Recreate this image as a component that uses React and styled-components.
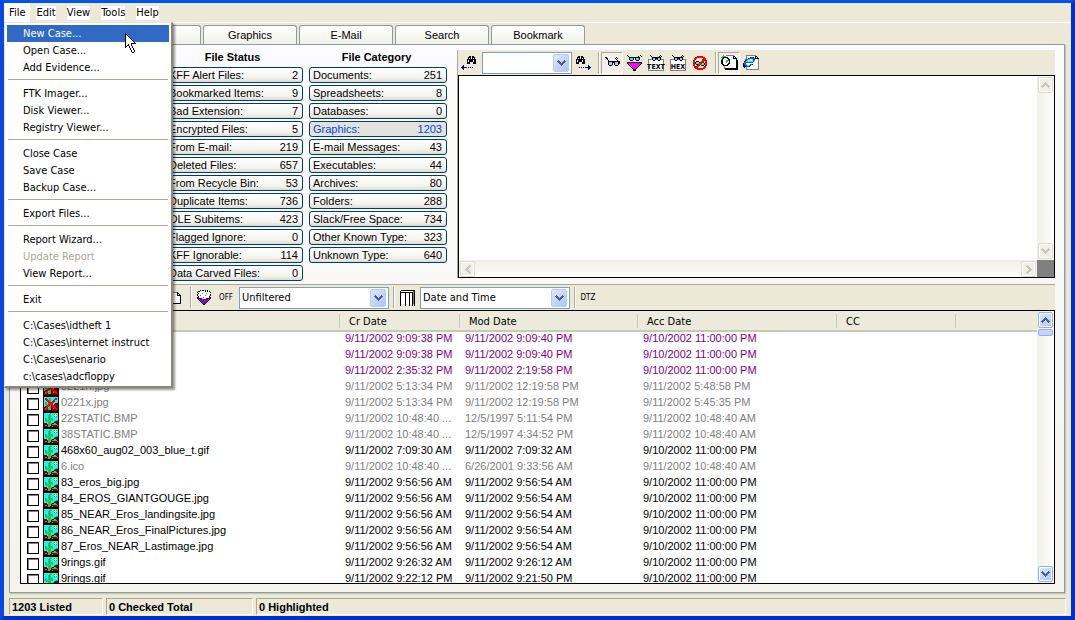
import React, { Component } from 'react'
import styled, { css, createGlobalStyle } from 'styled-components'

const tahoma = '"DejaVu Sans Condensed", "DejaVu Sans", sans-serif'
const arial = '"Liberation Sans", sans-serif'

const GlobalStyle = createGlobalStyle`
  * {
    box-sizing: border-box;
  }

  body {
    margin: 0;
    font: 11px/16px ${arial};
    color: #000000;
  }

  button,
  select,
  input {
    margin: 0;
    font: inherit;
    color: inherit;
  }
`

const Window = styled.div`
  display: flex;
  flex-direction: column;
  height: 100vh;
  min-height: 480px;
  border: 4px solid #0848e0;
  border-top: 3px solid #0055ea;
  border-right-color: #0030c8;
  border-bottom-color: #0030c8;
  background-color: #ece9d8;
`

/* menu bar */

const MenuBar = styled.nav`
  display: flex;
  gap: 1px;
  height: 20px;
  flex-shrink: 0;
  border-bottom: 1px solid #ffffff;
`

const MenuHolder = styled.div`
  position: relative;
  display: flex;
`

const MenuTitle = styled.button`
  padding: 0 5px;
  border: 0;
  font-family: ${tahoma};
  background-color: ${({ open }) => (open ? '#ffffff' : 'transparent')};
`

const MenuTitleText = styled.span`
  display: block;
  line-height: 14px;
  background-color: #ffffff;
`

const Menu = styled.div`
  position: absolute;
  z-index: 2;
  top: 19px;
  left: 0;
  width: 169px;
  padding: 2px 2px 1px 2px;
  border: 1px solid #ece9d8;
  border-right: 2px solid #8a867a;
  border-bottom: 2px solid #8a867a;
  background-color: #ffffff;
  box-shadow: 2px 2px 2px rgba(0, 0, 0, 0.4);
`

const MenuItem = styled.button`
  display: block;
  width: 100%;
  height: 17px;
  padding: 0 0 0 16px;
  border: 0;
  font-family: ${tahoma};
  line-height: 17px;
  text-align: left;
  white-space: nowrap;
  color: ${({ active, disabled }) => (active ? '#ffffff' : disabled ? '#aca899' : '#000000')};
  background-color: ${({ active }) => (active ? '#316ac5' : 'transparent')};
`

const MenuLine = styled.hr`
  height: 1px;
  margin: 3px 1px 5px;
  border: 0;
  background-color: #aca899;
`

const Pointer = styled.svg`
  position: absolute;
  z-index: 3;
  top: 10px;
  left: 120px;
`

/* tabs and the page under them */

const Tabs = styled.div`
  display: flex;
  flex-shrink: 0;
  gap: 2px;
  height: 21px;
  padding: 2px 0 0 7px;
`

const Tab = styled.button`
  width: 94px;
  padding: 0;
  border: 1px solid #919b9c;
  border-bottom: 0;
  border-radius: 3px 3px 0 0;
  background: linear-gradient(#ffffff, #f0f0ea);
`

const Page = styled.main`
  display: flex;
  flex: 1;
  flex-direction: column;
  min-height: 0;
  margin: 0 6px 0 5px;
  padding: 5px 9px 8px 10px;
  border: 1px solid #919b9c;
  background: linear-gradient(#fcfcfe, #f4f3ee);
  box-shadow: 1px 1px 1px #c8c5b2;
`

const Upper = styled.div`
  display: flex;
  flex-shrink: 0;
  height: 234px;
`

const Groups = styled.div`
  display: flex;
  flex-shrink: 0;
  gap: 6px;
  width: 437px;
  padding-left: 1px;
`

const Group = styled.section`
  display: flex;
  flex-direction: column;
  gap: 2px;
  width: 138px;
`

const GroupTitle = styled.h2`
  height: 15px;
  margin: 0;
  padding-right: 3px;
  font-size: 11px;
  line-height: 15px;
  text-align: center;
`

const Count = styled.button`
  display: flex;
  justify-content: space-between;
  height: 16px;
  padding: 0 4px 0 3px;
  border: 1px solid #003c74;
  border-radius: 3px;
  line-height: 14px;
  white-space: nowrap;
  color: ${({ active }) => (active ? '#0046d5' : '#000000')};
  background: ${({ active }) => (active ? '#e3e2dc' : 'linear-gradient(#ffffff, #f3f3ef 70%, #dedbd0)')};
`

const Preview = styled.section`
  display: flex;
  flex: 1;
  flex-direction: column;
  height: 228px;
  min-width: 0;
  border-left: 1px solid #aca899;
`

const PreviewBody = styled.div`
  display: grid;
  flex: 1;
  grid-template-columns: 1fr 17px;
  grid-template-rows: 1fr 17px;
  border: 1px solid #000000;
  background-color: #ffffff;
`

const Corner = styled.div`
  background-color: #808080;
`

/* toolbars */

const Toolbar = styled.div`
  display: flex;
  flex-shrink: 0;
  align-items: center;
  height: ${({ lined }) => (lined ? 26 : 25)}px;
  padding-left: ${({ lined }) => (lined ? 12 : 0)}px;
  border-top: ${({ lined }) => (lined ? '1px solid #aca899' : '0')};
  background-color: #ece9d8;
`

const Tool = styled.button`
  display: flex;
  align-items: center;
  justify-content: center;
  flex-shrink: 0;
  width: 22px;
  height: 22px;
  padding: 0;
  border: 1px solid transparent;
  font-family: ${tahoma};
  font-size: 8px;
  background-color: transparent;
  ${({ pressed }) => pressed && css`
    border-color: #aca899 #ffffff #ffffff #aca899;
    background-color: #f2f0e6;
  `}
`

const ToolLine = styled.div`
  flex-shrink: 0;
  width: 2px;
  height: 21px;
  margin: 0 1px 0 4px;
  border-left: 1px solid #aca899;
  border-right: 1px solid #ffffff;
`

const Combo = styled.div`
  display: grid;
  flex-shrink: 0;
  grid-template-columns: 1fr 18px;
  align-items: center;
  width: ${({ wide }) => (wide ? 150 : 90)}px;
  height: 22px;
  margin-left: 2px;
  border: 1px solid #7f9db9;
  background-color: #ffffff;
`

const ComboField = styled.select`
  grid-area: 1 / 1 / 2 / 3;
  width: 100%;
  height: 20px;
  padding: 0 0 0 2px;
  border: 0;
  appearance: none;
  font-family: ${tahoma};
  background-color: transparent;
`

const ComboArrow = styled.span`
  display: flex;
  grid-area: 1 / 2 / 2 / 3;
  align-items: center;
  justify-content: center;
  width: 16px;
  height: 18px;
  border: 1px solid #b9cbf3;
  border-radius: 2px;
  background: linear-gradient(135deg, #dfe8fe, #aec4f6);
  pointer-events: none;
`

/* scroll bars */

const Track = styled.div`
  display: flex;
  flex-direction: ${({ horizontal }) => (horizontal ? 'row' : 'column')};
  justify-content: space-between;
  padding: 1px;
  background: linear-gradient(${({ horizontal }) => (horizontal ? '180deg' : '90deg')}, #f0efe8, #fefefb);
`

const TrackButton = styled.button`
  display: flex;
  align-items: center;
  justify-content: center;
  width: 15px;
  height: 16px;
  padding: 0;
  border: 1px solid ${({ disabled }) => (disabled ? '#dddbcd' : '#98b1e4')};
  border-radius: 2px;
  outline: 1px solid #ffffff;
  outline-offset: -2px;
  background: ${({ disabled }) => (disabled ? '#efeee7' : 'linear-gradient(135deg, #dfe8fe, #aec4f6)')};
`

const Thumb = styled.div`
  height: 7px;
  margin-top: 1px;
  border: 1px solid #98b1e4;
  border-radius: 2px;
  background-color: #c3d3fd;
`

/* file list */

const List = styled.section`
  display: flex;
  flex: 1;
  min-height: 0;
  border: 1px solid #000000;
  background-color: #ffffff;
`

const ListScroller = styled.div`
  flex: 1;
  overflow: hidden;
`

const Table = styled.table`
  width: 100%;
  border-collapse: collapse;
  table-layout: fixed;
`

const Th = styled.th`
  width: ${({ cellWidth }) => (cellWidth ? `${cellWidth}px` : 'auto')};
  height: 20px;
  padding: 0;
  border-bottom: 2px solid #cbc7b8;
  font-family: ${tahoma};
  font-weight: normal;
  text-align: left;
  background-color: #ebeadb;
`

const ThLabel = styled.span`
  display: block;
  height: 14px;
  padding-left: 9px;
  border-right: 1px solid #c7c5b2;
  box-shadow: 1px 0 0 #ffffff;
  line-height: 15px;
  ${({ last }) => last && css`
    border: 0;
    box-shadow: none;
  `}
`

const rowColors = { alert: '#800080', deleted: '#808080', normal: '#000000' }

const Tr = styled.tr`
  color: ${({ kind }) => rowColors[kind]};
`

const Td = styled.td`
  height: 16px;
  padding: 0 0 4px 5px;
  line-height: 12px;
  white-space: nowrap;
`

const NameTd = styled.td`
  height: 16px;
  padding: 0 0 0 6px;
`

const NameCell = styled.div`
  display: flex;
  align-items: flex-start;
  height: 16px;
`

const Check = styled.input`
  flex-shrink: 0;
  width: 12px;
  height: 12px;
  margin: 2px 4px 0 0;
  appearance: none;
  border: 1px solid #000000;
  background-color: #ffffff;
  box-shadow: inset 1px 1px 0 #808080;
`

const FileLabel = styled.label`
  display: flex;
  gap: 2px;
  height: 16px;
  line-height: 12px;
  white-space: nowrap;
`

/* status bar */

const StatusBar = styled.footer`
  display: flex;
  flex-shrink: 0;
  gap: 3px;
  padding: 5px 5px 1px 5px;
`

const StatusCell = styled.div`
  flex: ${({ cellWidth }) => (cellWidth ? `0 0 ${cellWidth}px` : '1')};
  height: 17px;
  padding: 1px 0 0 2px;
  border: 1px solid #ffffff;
  border-top-color: #aca899;
  border-left-color: #aca899;
  font-weight: bold;
  line-height: 14px;
`

/* drawings: one character for each dot */

const inks = {
  k: '#000000',
  w: '#ffffff',
  c: '#00ffff',
  s: '#99ccff',
  m: '#ff00ff',
  p: '#9400d3',
  r: '#ff0000',
  d: '#800000',
  g: '#00e040',
  h: '#808080',
  y: '#ffff00',
  b: '#4d6185',
  l: '#c9c7ba',
  n: '#000080',
  t: '#2060c8'
}

const drawings = {
  down: ['.b.....b.', 'bbb...bbb', '.bbb.bbb.', '..bbbbb..', '...bbb...', '....b....'],
  up: ['....b....', '...bbb...', '..bbbbb..', '.bbb.bbb.', 'bbb...bbb', '.b.....b.'],
  upOff: ['....l....', '...lll...', '..lllll..', '.lll.lll.', 'lll...lll', '.l.....l.'],
  downOff: ['.l.....l.', 'lll...lll', '.lll.lll.', '..lllll..', '...lll...', '....l....'],
  leftOff: ['....l.', '...lll', '..lll.', '.lll..', 'lll...', '.lll..', '..lll.', '...lll', '....l.'],
  rightOff: ['.l....', 'lll...', '.lll..', '..lll.', '...lll', '..lll.', '.lll..', 'lll...', '.l....'],
  findBack: [
    '........kk.kk...',
    '.......kkk.kkk..',
    '.......kwk.kwk..',
    '......kkkkkkkkk.',
    '......kwkkkkwkk.',
    '......kwkkkkwkk.',
    '......kkk...kkk.',
    '......kkk...kkk.',
    '................',
    '..n.............',
    '.nn.............',
    'nnnnnn.n.n.n....',
    '.nn.............',
    '..n.............'
  ],
  findNext: [
    '...kk.kk........',
    '..kkk.kkk.......',
    '..kwk.kwk.......',
    '.kkkkkkkkk......',
    '.kwkkkkwkk......',
    '.kwkkkkwkk......',
    '.kkk...kkk......',
    '.kkk...kkk......',
    '................',
    '.............n..',
    '.............nn.',
    '....n.n.n.nnnnnn',
    '.............nn.',
    '.............n..'
  ],
  glasses: [
    'kk.........k...',
    '.kk.......k.k..',
    '..k........k...',
    '...k........k..',
    '...kkkkkkkkkkkk',
    '...kssskkkssskk',
    '...ksssk.kssskk',
    '...ksssk.ksssk.',
    '....kkk...kkk..',
    '...............',
    '...............'
  ],
  filter: [
    'k............k.',
    '.k.........k..k',
    '..kkkkkkkkkkk..',
    '..kccck.kccck..',
    '..kccck.kccck..',
    '...kkk...kkk...',
    '...............',
    'kkkkkkkkkkkkkkk',
    'kmmmmmmmmmmmmmk',
    '.kmmmmmmmmmmmk.',
    '..kmmmmmmmmmk..',
    '...kmmmmmmmk...',
    '....kmmmmmk....',
    '.....kmmmk.....',
    '......kkk......',
    '......kkk......'
  ],
  noView: [
    '....rrrrrr....',
    '..rrrrrrrrrr..',
    '.rrr......rrr.',
    '.rr......rrrr.',
    'rr.......rrrrr',
    'rr.kkk..rrr.rr',
    'rrkccckrrrk.rr',
    'rrkcccrrrcckrr',
    'rr.kkrrrccckrr',
    'rr..rrr.kkk.rr',
    '.rrrrr.....rr.',
    '.rrrr.....rrr.',
    '..rrrrrrrrrr..',
    '....rrrrrr....'
  ],
  pageFind: [
    '..g..hhhhhhhh....',
    '.gghhwwwwwwwkk...',
    'ggkkkkkwwwwwkwk..',
    '.kkwwwkkwwwwkkkk.',
    'gkwwwwwkkwwwwwwk.',
    'kkwwwgggkwwwwwwkk',
    'kkwwwggwkwwwwwwkk',
    'kkwwwgwwkwwwwwwkk',
    'kkwwwwwkkwwwwwwkk',
    '.kkwwwkkwwwwwwwkk',
    '..kkkkkwwwwwwwwkk',
    '...hwwwwwwwwwwwkk',
    '...hwwwwwwwwwwwkk',
    '...hkkkkkkkkkkkkk',
    '....kkkkkkkkkkkkk'
  ],
  web: [
    '...hhhhhhhhhh...',
    '...hwwwwwwwwkk..',
    '...hwwwnttnwkwk.',
    '...hwnttttntkkkk',
    '..hntccwwcttwwwh',
    '..ntcwwwwcttwwwh',
    '.ntccccccctwwwwh',
    '.tttttttttwwwwwh',
    'nttwwwwwwwwwwwwh',
    'nttcwwwttnwwwwwh',
    'nnttccttwwwwwwwh',
    'nnntttnwwwwwwwwh',
    '.n.hwwwwwwwwwwwh',
    '...hwwwwwwwwwwwh',
    '...hhhhhhhhhhhhh'
  ],
  page: [
    'hhhhhhhhk...',
    'hwwwwwwwkk..',
    'hwwwwwwwkwk.',
    'hwwwwwwwkkkk',
    'hwwwwwwwwwwk',
    'hwwwwwwwwwwk',
    'hwwwwwwwwwwk',
    'hwwwwwwwwwwk',
    'hwwwwwwwwwwk',
    'hwwwwwwwwwwk',
    'hwwwwwwwwwwk',
    'kkkkkkkkkkkk'
  ],
  filterOff: [
    '...k.kk.k.k...',
    '.kkwwwwwkwkwk.',
    'kwwwwwwwwwwwwk',
    '.kwwwhwwwhwww.',
    'kwwwwwwwwwwwwk',
    'kwwhwwwwhwwwwk',
    '.kwwwwwwwwwwk.',
    'kkwwwwhwwwwwkk',
    'kppkkwwwwkkppk',
    '.kppppkkppppk.',
    '..kppppppppk..',
    '...kppppppk...',
    '....kppppk....',
    '.....kppk.....',
    '......kk......'
  ],
  columns: [
    '.kkkkkkkkkkkkkk',
    'kwwwwwwwwwwwwhk',
    'kkkkkkkkkkkkkhk',
    'kwwwwkwwwkwwkhk',
    'kwwwwkwwwkwwkhk',
    'kwwwwkwwwkwwkhk',
    'kwwwwkwwwkwwkhk',
    'kwwwwkwwwkwwkhk',
    'kwwwwkwwwkwwkhk',
    'kwwwwkwwwkwwkhk',
    'kwwwwkwwwkwwkhk',
    'kwwwwkwwwkwwkhk',
    'kwwwwkwwwkwwkhk',
    'kwwwwkwwwkwwkhk',
    'k....k...k..k.k',
    'k....k...k..k.k'
  ],
  picture: [
    'kkkkkkkkkkkkkkkk',
    'kcccccchccccccck',
    'kccccchgccchyhck',
    'kccccghgcccyyyck',
    'kccccghgccchyhck',
    'kccccghgccccccck',
    'kchgcghghgccccck',
    'kchgcghghgccccck',
    'kchgggggggccchhk',
    'kcchgghgccchdddk',
    'kccccghgcchddddk',
    'kdddcghghddggddk',
    'kddddghgdhggggdk',
    'kdhhdghgddddddhk',
    'kddddghddhdddddk',
    'kkkkkkkkkkkkkkkk'
  ],
  pictureDeleted: [
    'kkkkkkkkkkkkkkkk',
    'kcccccccccccccck',
    'kcrrcchgccccrrck',
    'kcrrrchgcccrrrck',
    'kccrrrhgccrrccck',
    'kcccrrrgcrrrccck',
    'kchgcrrrrrrccchk',
    'kchgchrrrrccdddk',
    'kchggrrrrrcddddk',
    'kcchrrrhrrrddddk',
    'kcddrrghdrrrdddk',
    'kddrrcghddrrrddk',
    'kdhrrgghddhrrrdk',
    'kdrrdgghdddddrdk',
    'kddddddddddddddk',
    'kkkkkkkkkkkkkkkk'
  ],
  pointer: [
    'k..........',
    'kk.........',
    'kwk........',
    'kwwk.......',
    'kwwwk......',
    'kwwwwk.....',
    'kwwwwwk....',
    'kwwwwwwk...',
    'kwwwwwwwk..',
    'kwwwwwwwwk.',
    'kwwwwwkkkkk',
    'kwwkwwk....',
    'kwkkwwk....',
    'kk..kwwk...',
    'k...kwwk...',
    '.....kwwk..',
    '.....kwwk..',
    '......kwwk.',
    '......kwwk.',
    '.......kk..'
  ]
}

const Dots = ({ rows }) =>
  rows.map((row, y) =>
    [...row.matchAll(/([a-z])\1*/g)].map(run => (
      <rect
        key={`${y}-${run.index}`}
        x={run.index}
        y={y}
        width={run[0].length}
        height="1"
        fill={inks[run[1]]}
      />
    ))
  )

const Icon = ({ name }) => {
  const rows = drawings[name]
  return (
    <svg width={rows[0].length} height={rows.length} shapeRendering="crispEdges" aria-hidden="true">
      <Dots rows={rows} />
    </svg>
  )
}

// glasses over a sheet with the name of the view on it
const SheetIcon = ({ text }) => (
  <svg width="18" height="18" aria-hidden="true">
    <rect x="1.5" y="5.5" width="15" height="11" fill="#ffffff" stroke="#808080" />
    <g transform="translate(3 1)" shapeRendering="crispEdges">
      <Dots rows={['k.........k..', '.k.......k.k.', '..kkkkkkkkk..', '..ksskkkssk..', '..kssk.kssk..', '...kk...kk...']} />
    </g>
    <text
      x="9"
      y="15"
      textAnchor="middle"
      fontFamily="'Liberation Sans Narrow', 'DejaVu Sans Condensed', 'Liberation Sans', sans-serif"
      fontWeight="bold"
      fontSize="7"
    >
      {text}
    </text>
  </svg>
)

const ComboBox = ({ label, options, wide }) => (
  <Combo wide={wide || undefined}>
    <ComboField aria-label={label}>
      {options.map(option => <option key={option}>{option}</option>)}
    </ComboField>
    <ComboArrow><Icon name="down" /></ComboArrow>
  </Combo>
)

const fileMenu = [
  ['New Case...', 'Open Case...', 'Add Evidence...'],
  ['FTK Imager...', 'Disk Viewer...', 'Registry Viewer...'],
  ['Close Case', 'Save Case', 'Backup Case...'],
  ['Export Files...'],
  ['Report Wizard...', 'Update Report', 'View Report...'],
  ['Exit'],
  ['C:\\Cases\\idtheft 1', 'C:\\Cases\\internet instruct', 'C:\\Cases\\senario', 'c:\\cases\\adcfloppy']
]

// the first two tabs and the first group lie under the open menu
const tabs = ['', '', 'Graphics', 'E-Mail', 'Search', 'Bookmark']

const groups = [
  { title: '', counts: [] },
  {
    title: 'File Status',
    counts: [
      ['KFF Alert Files:', 2],
      ['Bookmarked Items:', 9],
      ['Bad Extension:', 7],
      ['Encrypted Files:', 5],
      ['From E-mail:', 219],
      ['Deleted Files:', 657],
      ['From Recycle Bin:', 53],
      ['Duplicate Items:', 736],
      ['OLE Subitems:', 423],
      ['Flagged Ignore:', 0],
      ['KFF Ignorable:', 114],
      ['Data Carved Files:', 0]
    ]
  },
  {
    title: 'File Category',
    counts: [
      ['Documents:', 251],
      ['Spreadsheets:', 8],
      ['Databases:', 0],
      ['Graphics:', 1203],
      ['E-mail Messages:', 43],
      ['Executables:', 44],
      ['Archives:', 80],
      ['Folders:', 288],
      ['Slack/Free Space:', 734],
      ['Other Known Type:', 323],
      ['Unknown Type:', 640]
    ]
  }
]

const columns = [
  ['', 319],
  ['Cr Date', 120],
  ['Mod Date', 178],
  ['Acc Date', 199],
  ['CC', 119],
  ['']
]

const files = [
  ['alert', '', '9/11/2002 9:09:38 PM', '9/11/2002 9:09:40 PM', '9/10/2002 11:00:00 PM'],
  ['alert', '', '9/11/2002 9:09:38 PM', '9/11/2002 9:09:40 PM', '9/10/2002 11:00:00 PM'],
  ['alert', '', '9/11/2002 2:35:32 PM', '9/11/2002 2:19:58 PM', '9/10/2002 11:00:00 PM'],
  ['deleted', '0221n.jpg', '9/11/2002 5:13:34 PM', '9/11/2002 12:19:58 PM', '9/11/2002 5:48:58 PM', 'pictureDeleted'],
  ['deleted', '0221x.jpg', '9/11/2002 5:13:34 PM', '9/11/2002 12:19:58 PM', '9/11/2002 5:45:35 PM', 'pictureDeleted'],
  ['deleted', '22STATIC.BMP', '9/11/2002 10:48:40 ...', '12/5/1997 5:11:54 PM', '9/11/2002 10:48:40 AM'],
  ['deleted', '38STATIC.BMP', '9/11/2002 10:48:40 ...', '12/5/1997 4:34:52 PM', '9/11/2002 10:48:40 AM'],
  ['normal', '468x60_aug02_003_blue_t.gif', '9/11/2002 7:09:30 AM', '9/11/2002 7:09:32 AM', '9/10/2002 11:00:00 PM'],
  ['deleted', '6.ico', '9/11/2002 10:48:40 ...', '6/26/2001 9:33:56 AM', '9/11/2002 10:48:40 AM'],
  ['normal', '83_eros_big.jpg', '9/11/2002 9:56:56 AM', '9/11/2002 9:56:54 AM', '9/10/2002 11:00:00 PM'],
  ['normal', '84_EROS_GIANTGOUGE.jpg', '9/11/2002 9:56:56 AM', '9/11/2002 9:56:54 AM', '9/10/2002 11:00:00 PM'],
  ['normal', '85_NEAR_Eros_landingsite.jpg', '9/11/2002 9:56:56 AM', '9/11/2002 9:56:54 AM', '9/10/2002 11:00:00 PM'],
  ['normal', '86_NEAR_Eros_FinalPictures.jpg', '9/11/2002 9:56:56 AM', '9/11/2002 9:56:54 AM', '9/10/2002 11:00:00 PM'],
  ['normal', '87_Eros_NEAR_Lastimage.jpg', '9/11/2002 9:56:56 AM', '9/11/2002 9:56:54 AM', '9/10/2002 11:00:00 PM'],
  ['normal', '9rings.gif', '9/11/2002 9:26:32 AM', '9/11/2002 9:26:12 AM', '9/10/2002 11:00:00 PM'],
  ['normal', '9rings.gif', '9/11/2002 9:22:12 PM', '9/11/2002 9:21:50 PM', '9/10/2002 11:00:00 PM']
]

const FileMenu = () => (
  <Menu>
    {fileMenu.map((items, i) => (
      <React.Fragment key={items[0]}>
        {i > 0 && <MenuLine />}
        {items.map(item => (
          <MenuItem
            key={item}
            active={item === 'New Case...' || undefined}
            disabled={item === 'Update Report'}
          >
            {item}
          </MenuItem>
        ))}
      </React.Fragment>
    ))}
    <Pointer width="11" height="20" shapeRendering="crispEdges" aria-hidden="true">
      <Dots rows={drawings.pointer} />
    </Pointer>
  </Menu>
)

const FileRow = ({ file, id }) => {
  const [kind, name, created, modified, accessed, icon = 'picture'] = file
  return (
    <Tr kind={kind}>
      <NameTd>
        <NameCell>
          <Check type="checkbox" id={id} aria-label={name || 'File'} />
          <FileLabel htmlFor={id}><Icon name={icon} />{name}</FileLabel>
        </NameCell>
      </NameTd>
      <Td>{created}</Td>
      <Td>{modified}</Td>
      <Td>{accessed}</Td>
      <Td />
      <Td />
    </Tr>
  )
}

class App extends Component {
  render() {
    return (
      <Window>
        <GlobalStyle />
        <MenuBar>
          <MenuHolder>
            <MenuTitle open><MenuTitleText>File</MenuTitleText></MenuTitle>
            <FileMenu />
          </MenuHolder>
          {['Edit', 'View', 'Tools', 'Help'].map(title => (
            <MenuTitle key={title}><MenuTitleText>{title}</MenuTitleText></MenuTitle>
          ))}
        </MenuBar>
        <Tabs>
          {tabs.map((tab, i) => (
            <Tab key={i} aria-label={tab || `Tab ${i + 1}`}>{tab}</Tab>
          ))}
        </Tabs>
        <Page>
          <Upper>
            <Groups>
              {groups.map(({ title, counts }) => (
                <Group key={title}>
                  <GroupTitle>{title}</GroupTitle>
                  {counts.map(([label, value]) => (
                    <Count key={label} active={label === 'Graphics:' || undefined}>
                      <span>{label}</span>
                      <span>{value}</span>
                    </Count>
                  ))}
                </Group>
              ))}
            </Groups>
            <Preview>
              <Toolbar>
                <Tool aria-label="Find previous"><Icon name="findBack" /></Tool>
                <ComboBox label="Find" options={['']} />
                <Tool aria-label="Find next"><Icon name="findNext" /></Tool>
                <ToolLine />
                <Tool pressed aria-label="View"><Icon name="glasses" /></Tool>
                <Tool aria-label="View filtered text"><Icon name="filter" /></Tool>
                <Tool aria-label="View as text"><SheetIcon text="TEXT" /></Tool>
                <Tool aria-label="View as hex"><SheetIcon text="HEX" /></Tool>
                <Tool aria-label="No view"><Icon name="noView" /></Tool>
                <ToolLine />
                <Tool pressed aria-label="Outside viewer"><Icon name="pageFind" /></Tool>
                <Tool aria-label="Browser viewer"><Icon name="web" /></Tool>
              </Toolbar>
              <PreviewBody>
                <div />
                <Track>
                  <TrackButton disabled aria-label="Up"><Icon name="upOff" /></TrackButton>
                  <TrackButton disabled aria-label="Down"><Icon name="downOff" /></TrackButton>
                </Track>
                <Track horizontal>
                  <TrackButton disabled aria-label="Left"><Icon name="leftOff" /></TrackButton>
                  <TrackButton disabled aria-label="Right"><Icon name="rightOff" /></TrackButton>
                </Track>
                <Corner />
              </PreviewBody>
            </Preview>
          </Upper>
          <Toolbar lined>
            {[1, 2, 3, 4, 5, 6, 7].map(n => (
              <Tool key={n} aria-label={`Page ${n}`}><Icon name="page" /></Tool>
            ))}
            <ToolLine />
            <Tool aria-label="Filter"><Icon name="filterOff" /></Tool>
            <Tool>OFF</Tool>
            <ComboBox label="Filter name" options={['Unfiltered']} wide />
            <ToolLine />
            <Tool aria-label="Columns"><Icon name="columns" /></Tool>
            <ComboBox label="Column setting" options={['Date and Time']} wide />
            <ToolLine />
            <Tool>DTZ</Tool>
          </Toolbar>
          <List>
            <ListScroller>
              <Table>
                <thead>
                  <tr>
                    {columns.map(([label, width], i) => (
                      <Th key={i} cellWidth={width}>
                        <ThLabel last={!width || undefined}>{label}</ThLabel>
                      </Th>
                    ))}
                  </tr>
                </thead>
                <tbody>
                  {files.map((file, i) => <FileRow key={i} id={`file-${i}`} file={file} />)}
                </tbody>
              </Table>
            </ListScroller>
            <Track>
              <div>
                <TrackButton aria-label="Scroll up"><Icon name="up" /></TrackButton>
                <Thumb />
              </div>
              <TrackButton aria-label="Scroll down"><Icon name="down" /></TrackButton>
            </Track>
          </List>
        </Page>
        <StatusBar>
          <StatusCell cellWidth={94}>1203 Listed</StatusCell>
          <StatusCell cellWidth={147}>0 Checked Total</StatusCell>
          <StatusCell>0 Highlighted</StatusCell>
        </StatusBar>
      </Window>
    )
  }
}

export default App
